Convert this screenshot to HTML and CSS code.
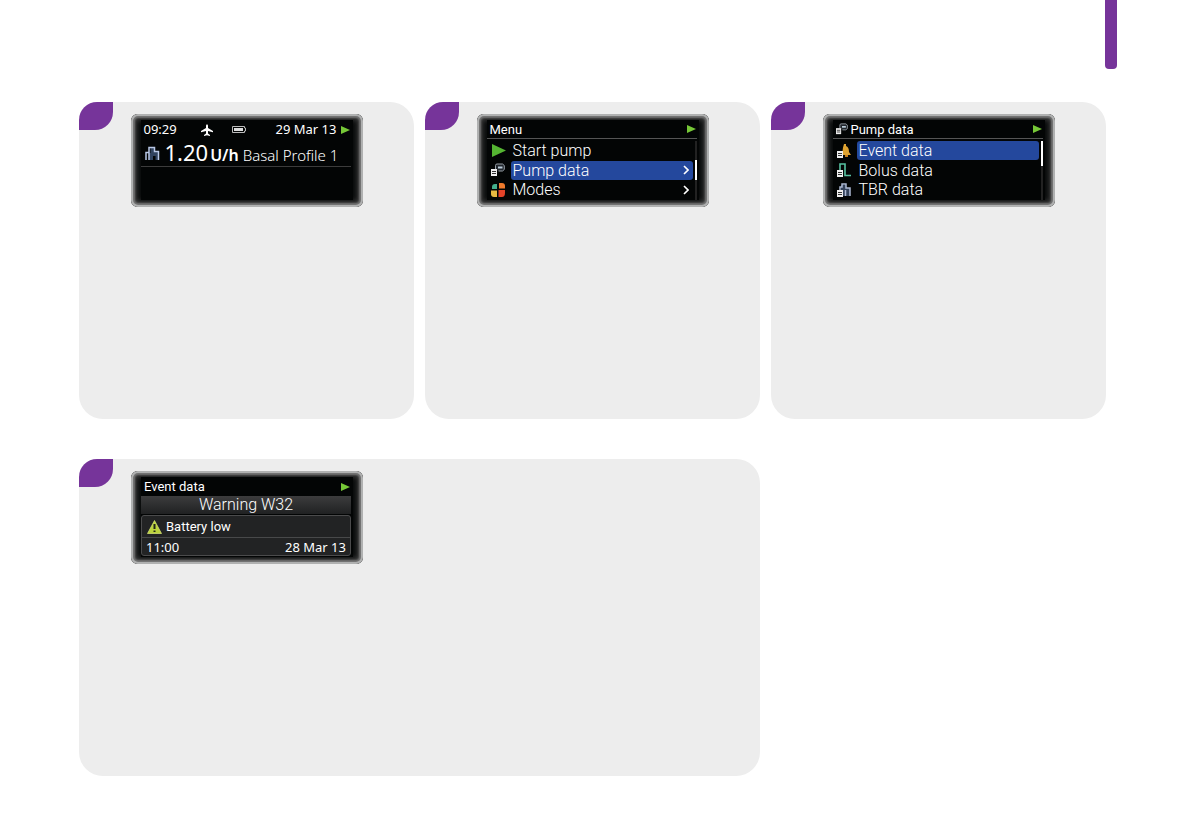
FILE: index.html
```
<!DOCTYPE html>
<html lang="en">
<head>
<meta charset="utf-8">
<meta name="viewport" content="width=device-width, initial-scale=1">
<title>Event data</title>
<link rel="stylesheet" href="styles.css">
</head>
<body>
<svg width="0" height="0" class="sprite" aria-hidden="true">
  <symbol id="play" viewBox="0 0 9 8"><path d="M0 0 9 4 0 8Z" fill="#76c837"/></symbol>
  <symbol id="pump" viewBox="0 0 14 14">
    <path d="M4.500 6V2.500Q4.500 1 6 1H11.500L13.300 2.500V6.500L11.500 8H7.500" fill="#22272d" stroke="#99a1a8"/>
    <path d="M7 3.500H11.500V5.500H7Z" fill="#b9cbd8"/>
    <path d="M0 6H6V13H0Z" fill="#eee"/><path d="M1 8.500H5M1 10.500H5" stroke="#333"/>
  </symbol>
  <symbol id="page" viewBox="0 0 6 7"><path d="M0 0H6V7H0Z" fill="#eee"/><path d="M1 2.500H5M1 4.500H5" stroke="#333"/></symbol>
</svg>
<span class="tab"></span>
<main class="steps">
  <section class="panel">
    <span class="corner"></span>
    <div class="device"><div class="screen">
      <header class="bar status">
        <span>09:29</span>
        <svg class="plane" viewBox="0 0 12 12"><path d="M6 0 7 1.500V4L12 7V8.200L7 7V9.500L9 11V12L6 11.300 3 12V11L5 9.500V7L0 8.200V7L5 4V1.500Z" fill="#fff"/></svg>
        <svg class="battery" viewBox="0 0 14 7"><path d="M.5.5H12.500V2H13.500V5H12.500V6.500H.5Z" fill="none" stroke="#bbb"/><path d="M2 2H11V5H2Z" fill="#ddd"/></svg>
        <span class="date">29 Mar 13</span>
        <svg class="play"><use href="#play"/></svg>
      </header>
      <div class="basal">
        <svg class="city" viewBox="0 0 15 15"><path d="M4 14V7H5.500V2H9.500V6H13.500V14H10.500V10H8V14Z" fill="#31435f"/><path d="M1 14V6.500H4V1.500H9.500V5.500H13.500V14M4 14V7" fill="none" stroke="#b9c8e7" stroke-width="1.500"/></svg>
        <span class="rate">1.20</span><span class="unit">U/h</span><span class="profile">Basal Profile 1</span>
      </div>
    </div></div>
  </section>
  <section class="panel">
    <span class="corner"></span>
    <div class="device"><div class="screen">
      <header class="bar lined"><span>Menu</span><svg class="play end"><use href="#play"/></svg></header>
      <div class="menu">
        <div class="items">
          <button class="item"><svg class="icon" viewBox="0 0 15 14"><path d="M1 0 15 6.500 1 13Z" fill="#55b532"/></svg><span class="label">Start pump</span></button>
          <button class="item"><svg class="icon" viewBox="0 0 15 14"><use href="#pump" width="14" height="14"/></svg><span class="label selected">Pump data<svg class="chevron" viewBox="0 0 6 10"><path d="m1 1 4 4-4 4" fill="none" stroke="#fff" stroke-width="1.600"/></svg></span></button>
          <button class="item"><svg class="icon" viewBox="0 0 15 14"><path d="M1 6V4Q1 1 4 1H6V6Z" fill="#43ae8c"/><path d="M8 0H11Q14 0 14 3V5.500H8Z" fill="#ee7a2c"/><path d="M0 7.500H6V14H3Q0 14 0 11Z" fill="#e7b941"/><path d="M7.500 7H14V10Q14 14 11 14H7.500Z" fill="#e34329"/></svg><span class="label">Modes<svg class="chevron" viewBox="0 0 6 10"><path d="m1 1 4 4-4 4" fill="none" stroke="#fff" stroke-width="1.600"/></svg></span></button>
        </div>
        <div class="track"><i class="thumb middle"></i></div>
      </div>
    </div></div>
  </section>
  <section class="panel">
    <span class="corner"></span>
    <div class="device"><div class="screen">
      <header class="bar lined"><svg class="small"><use href="#pump"/></svg><span>Pump data</span><svg class="play end"><use href="#play"/></svg></header>
      <div class="menu">
        <div class="items">
          <button class="item"><svg class="icon" viewBox="0 0 15 14"><path d="M7 0H9V2Q12 3 12 8L14 11H5L6 3.500Z" fill="#dfa331"/><path d="M8 11H11V13H8Z" fill="#c47c19"/><use href="#page" y="7" width="6" height="7"/></svg><span class="label selected">Event data</span></button>
          <button class="item"><svg class="icon" viewBox="0 0 15 14"><path d="M3 8V1H8V12.500H14" fill="none" stroke="#58c3a2" stroke-width="1.600"/><use href="#page" y="7" width="6" height="7"/></svg><span class="label">Bolus data</span></button>
          <button class="item"><svg class="icon" viewBox="0 0 15 14"><path d="M4 13V2H9V5H13V13Z" fill="#34435b"/><path d="M3 8V4H5V1H9V5H13V13M8.500 13V7" fill="none" stroke="#adb9d3" stroke-width="1.500"/><use href="#page" y="7" width="6" height="7"/></svg><span class="label">TBR data</span></button>
        </div>
        <div class="track"><i class="thumb"></i></div>
      </div>
    </div></div>
  </section>
  <section class="panel wide">
    <span class="corner"></span>
    <div class="device"><div class="screen">
      <header class="bar"><span>Event data</span><svg class="play end"><use href="#play"/></svg></header>
      <h2 class="warning">Warning W32</h2>
      <div class="event">
        <p class="cause"><svg class="alert" viewBox="0 0 15 14"><path d="M7.500.5 14.500 13.500H.5Z" fill="#bdd43b" stroke="#dbe87b" stroke-width=".7"/><path d="M7.500 4V9M7.500 10.500V12" stroke="#20251a" stroke-width="2"/></svg>Battery low</p>
        <p class="when"><span>11:00</span><span>28 Mar 13</span></p>
      </div>
    </div></div>
  </section>
</main>
</body>
</html>
```
FILE: styles.css
```
* { box-sizing: border-box; }
body { margin: 0; background: #fff; color: #fff; font-family: Roboto, "Liberation Sans", sans-serif; font-size: 13px; }
svg { display: block; flex: none; }
.sprite { position: absolute; }
.tab { position: absolute; top: 0; right: 74px; width: 12px; height: 69px; background: #76349a; border-radius: 0 0 4px 4px; }
.steps { display: grid; grid-template-columns: repeat(3, 1fr); gap: 40px 11px; padding: 102px 85px 60px 79px; }
.panel { position: relative; min-height: 317px; padding-top: 12px; background: #ededed; border-radius: 24px; }
.wide { grid-column: span 2; }
.corner { position: absolute; top: 0; left: 0; width: 34px; height: 28px; background: #76349a; border-radius: 18px 0 18px 0; }
.device { width: 232px; margin: 0 auto; padding: 6px 10px 7px; min-height: 93px; background: #080a0a; border-radius: 7px; box-shadow: inset 0 0 0 2px #b0b1b1, inset 0 0 2px 4px #777, inset 0 0 5px 6px #3a3a3a; }
.wide .device { margin-left: 52px; }
.screen { height: 80px; padding-right: 2px; background: #030505; }
.bar { display: flex; align-items: center; height: 19px; padding: 0 1px 0 3px; font-size: 13px; line-height: 19px; }
.lined { border-bottom: 1px solid #555; }
.play { width: 9px; height: 8px; }
.end { margin-left: auto; }
.small { width: 12px; height: 14px; margin-right: 3px; }
.status { font-family: "Noto Sans", sans-serif; }
.plane { width: 12px; height: 12px; margin-left: 24px; }
.battery { width: 14px; height: 7px; margin-left: 19px; }
.date { margin-left: auto; margin-right: 4px; }
.basal { display: flex; align-items: baseline; height: 28px; padding-left: 4px; border-bottom: 1px solid #3c3c3c; font-family: "Noto Sans", sans-serif; line-height: 26px; white-space: nowrap; }
.city { width: 15px; height: 15px; margin-right: 5px; }
.rate { font-size: 22px; }
.unit { margin-left: 2px; font-size: 16px; font-weight: 600; }
.profile { margin-left: 4px; font-size: 15px; font-weight: 300; }
.menu { display: flex; gap: 2px; padding-top: 2px; }
.items { flex: 1; display: grid; grid-template-rows: 19px 20px 19px; }
.item { display: flex; align-items: center; gap: 5px; padding: 0 0 0 4px; border: 0; background: none; color: #fff; font: 300 16px/19px Roboto, "Liberation Sans", sans-serif; text-align: left; }
.icon { width: 15px; height: 14px; }
.label { flex: 1; display: flex; align-items: center; justify-content: space-between; height: 19px; padding: 0 4px 0 2px; border-radius: 3px; }
.selected { background: #24489d; }
.chevron { width: 6px; height: 10px; }
.track { width: 2px; height: 59px; background: #222; }
.thumb { display: block; height: 25px; background: #fff; }
.middle { height: 20px; margin-top: 19px; }
.warning { margin: 0; height: 18px; background: linear-gradient(#3c3c3d, #202122); font-size: 16px; font-weight: 300; line-height: 18px; text-align: center; }
.event { margin-top: 1px; border: 1px solid #4b4b4c; border-radius: 3px; background: #222324; }
.cause, .when { display: flex; align-items: center; margin: 0; padding: 0 5px; }
.cause { height: 22px; border-bottom: 1px solid #48494a; }
.alert { width: 15px; height: 14px; margin-right: 4px; }
.when { justify-content: space-between; height: 17px; padding: 0 4px; font-family: "Noto Sans", sans-serif; }
```
